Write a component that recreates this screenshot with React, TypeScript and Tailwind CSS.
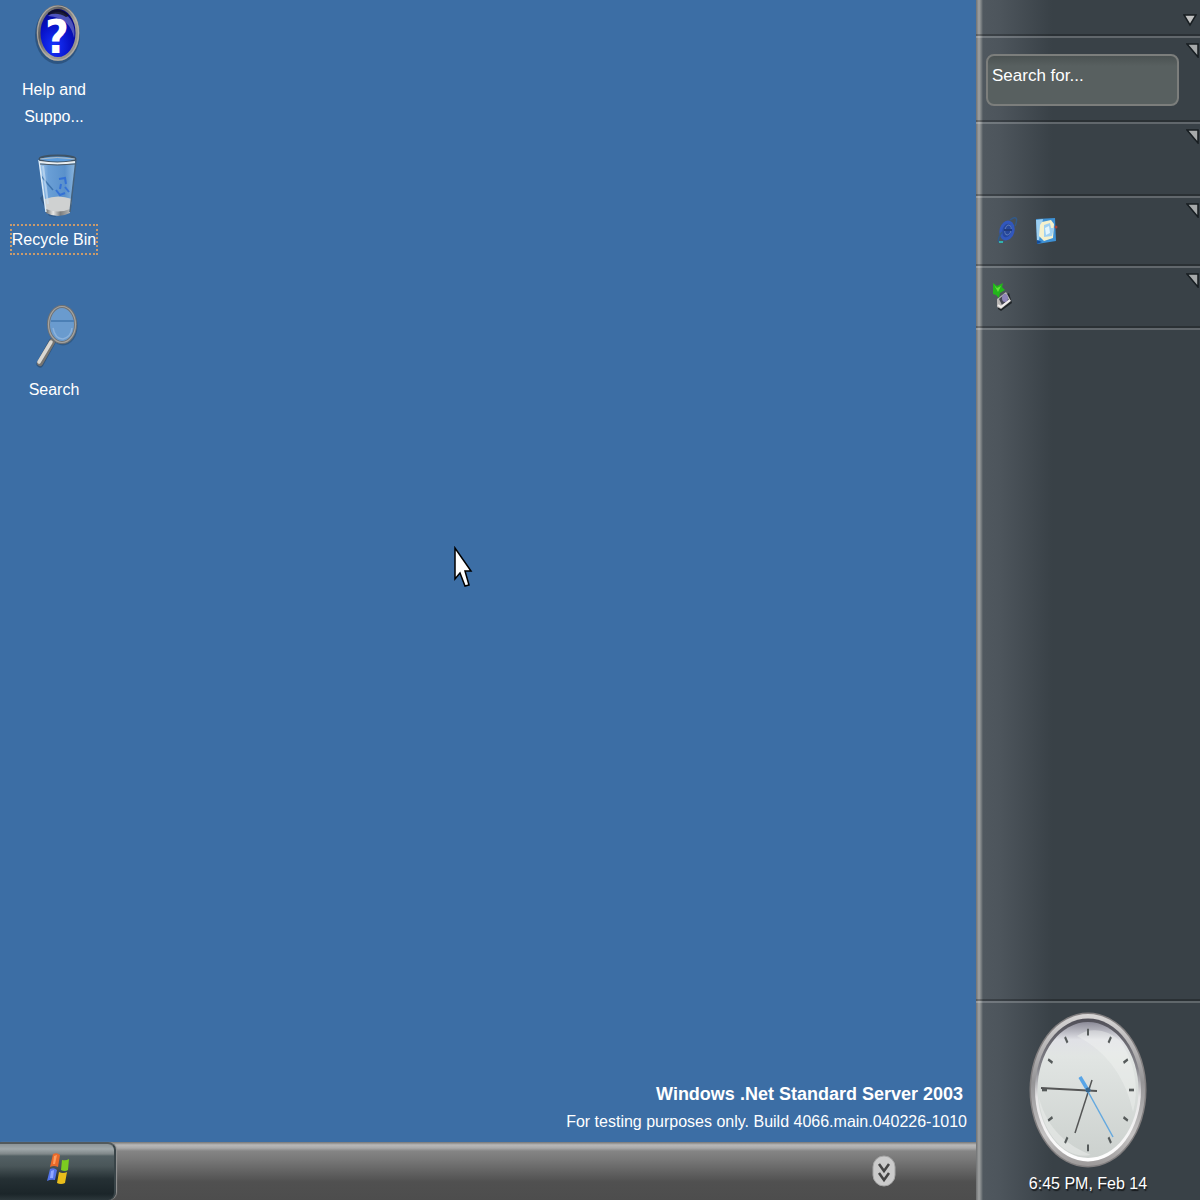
import type { ReactNode } from "react";

function HelpIcon() {
  return (
    <svg viewBox="0 0 64 64" className="h-16 w-16" aria-hidden="true">
      <defs>
        <linearGradient id="helpRim" x1="0" y1="0" x2="1" y2="1">
          <stop offset="0" stopColor="#9a9a9a" />
          <stop offset="0.3" stopColor="#5a5a5e" />
          <stop offset="0.6" stopColor="#a5a29c" />
          <stop offset="1" stopColor="#87847f" />
        </linearGradient>
        <radialGradient id="helpFill" cx="0.4" cy="0.75" r="0.8">
          <stop offset="0" stopColor="#1634ff" />
          <stop offset="0.55" stopColor="#0710c4" />
          <stop offset="1" stopColor="#05066a" />
        </radialGradient>
      </defs>
      <ellipse cx="35.5" cy="31" rx="22.5" ry="29" fill="#1e3c60" opacity="0.5" />
      <ellipse cx="36" cy="29" rx="19.5" ry="26" fill="url(#helpFill)" stroke="url(#helpRim)" strokeWidth="4" />
      <ellipse cx="36" cy="29" rx="20.5" ry="27" fill="none" stroke="#b9b5ad" strokeWidth="1.2" opacity="0.8" />
      <path d="M26 12C32 6 43 6 49 16C53 23 53 29 52 34C50 22 42 13 26 12Z" fill="#b9c0e8" opacity="0.4" />
      <path d="M26 9C32 3 41 4 47 12L44 13C38 9 32 9 26 11Z" fill="#101018" opacity="0.8" />
      <text x="35" y="49" textAnchor="middle" fontFamily="'DejaVu Sans Condensed','DejaVu Sans',sans-serif" fontWeight="700" fontSize="46" fill="#fff">?</text>
    </svg>
  );
}

function RecycleIcon() {
  return (
    <svg viewBox="0 0 64 64" className="h-16 w-16" aria-hidden="true">
      <defs>
        <linearGradient id="glass" x1="0" y1="0" x2="1" y2="0">
          <stop offset="0" stopColor="#a9cdee" />
          <stop offset="0.25" stopColor="#6a9fd6" />
          <stop offset="0.7" stopColor="#5a91cb" />
          <stop offset="1" stopColor="#8fb9e0" />
        </linearGradient>
        <linearGradient id="base" x1="0" y1="0" x2="1" y2="0">
          <stop offset="0" stopColor="#6d7072" />
          <stop offset="0.3" stopColor="#e8e8e6" />
          <stop offset="0.6" stopColor="#7b7d7e" />
          <stop offset="1" stopColor="#b8b8b6" />
        </linearGradient>
      </defs>
      <path d="M18 44L27 62L34 63L22 40Z" fill="#274a72" opacity="0.5" />
      <path d="M17 5L54 5L48 58Q36 64 24 58Z" fill="url(#glass)" />
      <path d="M23 45Q36 40 50 45L48 58Q36 64 24 58Z" fill="#cfd1d1" />
      <path d="M24 55Q36 60 48 55L48 59Q36 65 24 59Z" fill="url(#base)" />
      <path d="M19 22L31 36" stroke="#3d73ad" strokeWidth="1.5" />
      <path d="M37 25L43 24L44 30M39 30L38 35M34 36L38 41L43 39M43 33L47 38" fill="none" stroke="#2262d8" strokeWidth="2" opacity="0.7" />
      <path d="M17 6L24 58" stroke="#dcebf7" strokeWidth="1.5" />
      <path d="M21 12L26 50" stroke="#cde2f5" strokeWidth="2" opacity="0.6" />
      <path d="M54 6L48 58" stroke="#45617c" strokeWidth="1.5" />
      <ellipse cx="35.5" cy="5" rx="18" ry="3.5" fill="#5d9cdb" stroke="#3f5365" strokeWidth="2" />
      <path d="M18 5Q35 2 53 5" fill="none" stroke="#aebac4" strokeWidth="1" />
      <path d="M18 8Q35 11 53 8" fill="none" stroke="#e9eef1" strokeWidth="2" />
      <path d="M18 10Q35 12 53 10" fill="none" stroke="#4a5966" strokeWidth="1" />
    </svg>
  );
}

function MagnifierIcon() {
  return (
    <svg viewBox="0 0 64 64" className="h-16 w-16" aria-hidden="true">
      <path d="M30 38L18 60" stroke="#263c55" strokeWidth="7" strokeLinecap="round" opacity="0.5" />
      <path d="M30 38L18 59" stroke="#777571" strokeWidth="6" strokeLinecap="round" />
      <path d="M29 38L17 58" stroke="#d9d7d2" strokeWidth="3.5" strokeLinecap="round" />
      <ellipse cx="41" cy="22" rx="14.5" ry="19.5" fill="#284866" opacity="0.5" />
      <ellipse cx="40" cy="20.5" rx="13.5" ry="18" fill="#6a9bce" stroke="#6f7275" strokeWidth="3" />
      <ellipse cx="40" cy="20.5" rx="13.5" ry="18" fill="none" stroke="#a5a4a0" strokeWidth="1.2" />
      <path d="M29 17H52" fill="none" stroke="#4b7fb5" strokeWidth="2" />
      <path d="M31 24Q33 35 41 35Q49 33 50 24" fill="none" stroke="#8bb2dc" strokeWidth="1.5" />
    </svg>
  );
}

function BrowserIcon() {
  return (
    <svg viewBox="0 0 24 30" className="h-[30px] w-6" aria-hidden="true">
      <ellipse cx="12" cy="14.5" rx="6" ry="8.5" transform="rotate(15 12 14.5)" fill="#27479b" stroke="#3157bd" strokeWidth="3" />
      <ellipse cx="13" cy="14" rx="3" ry="5" transform="rotate(15 13 14)" fill="none" stroke="#5e7cb8" strokeWidth="1" />
      <path d="M9 14H17" stroke="#213a7b" strokeWidth="2" />
      <path d="M15 4C22-1 23 3 20 10M7 16C1 25 3 29 9 25" fill="none" stroke="#335987" strokeWidth="1.5" />
      <path d="M4 26L8 26" stroke="#32b4ad" strokeWidth="2" />
    </svg>
  );
}

function MailIcon() {
  return (
    <svg viewBox="0 0 24 30" className="h-[30px] w-6" aria-hidden="true">
      <path d="M1 3L20 2L21 25L2 28Z" fill="#3e91d5" />
      <path d="M1 4L8 3L4 24L2 25Z" fill="#c4e8fb" opacity="0.7" />
      <path d="M7 6L16 4L19 8L18 22L9 25L4 20L5 9Z" fill="#f5f1cd" />
      <path d="M9 9L15 7L16 12L19 12L17 20L9 21Z" fill="#9fd1f3" />
      <path d="M10 12L14 10L15 17L11 19Z" fill="#e2f5fd" />
      <path d="M2 24L7 26L2 28Z" fill="#124b9b" />
      <circle cx="21" cy="11" r="1.5" fill="#a84438" />
    </svg>
  );
}

function HardwareIcon() {
  return (
    <svg viewBox="0 0 22 30" className="h-[30px] w-[22px]" aria-hidden="true">
      <path d="M6 19L17 11L20 21L9 29L6 27Z" fill="#202529" />
      <path d="M5 17L14 10L19 19L9 27L5 25Z" fill="#b8b5b3" />
      <path d="M7 17L13 12L17 18L10 23Z" fill="#454653" />
      <ellipse cx="13" cy="16" rx="3" ry="4" fill="#8e84b8" />
      <path d="M6 23L9 25L18 18" fill="none" stroke="#f1eeee" strokeWidth="2" />
      <path d="M1 1L5 4L11 1L10 5L13 8L8 11L7 16L4 13L1 12Z" fill="#22b51b" />
      <path d="M2 3L5 6L9 4L6 10Z" fill="#61dd38" />
    </svg>
  );
}

function WindowsFlag() {
  return (
    <svg viewBox="0 0 24 32" className="h-8 w-6" aria-hidden="true">
      <path d="M6 1Q10-1 13 2L11 14Q7 12 3 14Z" fill="#e9692a" />
      <path d="M15 7Q19 8 22 6L21 17Q18 19 14 17Z" fill="#7ccc20" />
      <path d="M3 16Q7 14 10 17L8 27Q4 26 0 28Z" fill="#5474e8" />
      <path d="M12 19Q16 21 20 19L18 30Q14 32 10 30Z" fill="#e9bd1b" />
      <path d="M7 3L10 2L8 11L6 11Z" fill="#ff9d5d" />
      <path d="M4 18L7 17L6 25L3 25Z" fill="#91a8ff" />
    </svg>
  );
}

function Clock() {
  const ticks = Array.from({ length: 12 }, (_, i) => i * 30);

  return (
    <svg viewBox="0 0 118 156" className="h-[156px] w-[118px]" role="img" aria-label="Clock">
      <defs>
        <linearGradient id="clockRim" x1="0" y1="0" x2="0" y2="1">
          <stop offset="0" stopColor="#d8d6d6" />
          <stop offset="0.45" stopColor="#959496" />
          <stop offset="0.8" stopColor="#c4c2c2" />
          <stop offset="1" stopColor="#9c9999" />
        </linearGradient>
        <linearGradient id="clockBezel" x1="0" y1="0" x2="0" y2="1">
          <stop offset="0" stopColor="#504f58" />
          <stop offset="0.35" stopColor="#85858b" />
          <stop offset="0.55" stopColor="#e7e6e7" />
          <stop offset="1" stopColor="#ffffff" />
        </linearGradient>
        <linearGradient id="clockFace" x1="0" y1="0" x2="0" y2="1">
          <stop offset="0" stopColor="#8c8b98" />
          <stop offset="0.13" stopColor="#e0e1e6" />
          <stop offset="0.25" stopColor="#e1e5e3" />
          <stop offset="1" stopColor="#ccd1ce" />
        </linearGradient>
      </defs>
      <ellipse cx="59" cy="78" rx="58.5" ry="77.5" fill="#827f80" />
      <ellipse cx="59" cy="78" rx="57" ry="76" fill="url(#clockRim)" />
      <ellipse cx="59" cy="78" rx="53" ry="71.5" fill="url(#clockBezel)" />
      <ellipse cx="59" cy="78" rx="50.5" ry="68" fill="url(#clockFace)" />
      <path d="M48 24C80 40 98 70 104 100C110 80 107 52 92 30C80 18 62 14 48 24Z" fill="#f2f4f3" opacity="0.4" />
      <path d="M10 86C19 118 38 133 62 143C36 149 12 119 10 86Z" fill="#edf0ee" opacity="0.5" />
      <g transform="translate(59 78) scale(1 1.330)">
        {ticks.map((angle) => (
          <path key={angle} d="M0-46V-41" stroke="#555a5a" strokeWidth="2" transform={`rotate(${angle})`} />
        ))}
      </g>
      <path d="M12 76L68 79" stroke="#555656" strokeWidth="2" />
      <path d="M46 121L63 68" stroke="#555656" strokeWidth="1.5" />
      <path d="M51 65L84 125" stroke="#65a9df" strokeWidth="1.5" />
      <path d="M51 65L60 80" stroke="#58a5e7" strokeWidth="3.5" />
      <circle cx="59" cy="78" r="2.5" fill="#39658b" />
    </svg>
  );
}

function DesktopItem({ label, focused, children }: { label: string; focused?: boolean; children: ReactNode }) {
  return (
    <button className="flex h-[150px] w-full flex-col items-center gap-2 pt-1">
      {children}
      <span className={focused ? "leading-[27px] outline-2 outline-dotted outline-[#c99a6c]" : "w-20 leading-[27px]"}>
        {label}
      </span>
    </button>
  );
}

function PanelMenu({ label }: { label: string }) {
  return (
    <button aria-label={label} className="h-4 w-[14px] shrink-0">
      <svg viewBox="0 0 14 16" className="h-4 w-[14px]">
        <path d="M1 2H12V15Z" fill="#a7aaab" stroke="#171d21" strokeWidth="1.5" />
      </svg>
    </button>
  );
}

function Sidebar() {
  const panel = "flex items-start justify-between border-t-2 border-b-2 border-t-white/20 border-b-black/25 pt-1";

  return (
    <aside className="flex w-56 shrink-0 flex-col bg-[linear-gradient(90deg,#6f7172_0px,#a0a2a2_3px,#7d8284_5px,#50585f_7px,#4d555c_24px,#394147_76px,#394147_100%)]">
      <div className="flex h-9 justify-end border-b-2 border-b-black/25 pt-3 pr-[3px]">
        <button aria-label="Sidebar menu" className="h-4 w-[14px]">
          <svg viewBox="0 0 14 16" className="h-4 w-[14px]">
            <path d="M1 3H13L7 13Z" fill="#c1c2c2" stroke="#171d21" strokeWidth="1.5" />
          </svg>
        </button>
      </div>
      <section className={`${panel} h-[86px]`}>
        <input
          type="text"
          aria-label="Search for"
          placeholder="Search for..."
          className="mt-3 mr-[7px] ml-[10px] h-[52px] min-w-0 flex-1 rounded-lg border-2 border-[#7c7e7c] bg-[linear-gradient(180deg,#4b5252_0px,#586060_10px,#586060_100%)] px-1 pb-2 text-[17px] outline-none placeholder:text-white placeholder:opacity-100"
        />
        <PanelMenu label="Search options" />
      </section>
      <section className={`${panel} h-[74px]`}>
        <span className="flex-1" />
        <PanelMenu label="Panel options" />
      </section>
      <section className={`${panel} h-[70px]`}>
        <div className="flex gap-4 pt-[14px] pl-[19px]">
          <button aria-label="Internet" className="h-[30px]"><BrowserIcon /></button>
          <button aria-label="Mail" className="h-[30px]"><MailIcon /></button>
        </div>
        <PanelMenu label="Quick launch options" />
      </section>
      <section className={`${panel} h-[62px]`}>
        <button aria-label="Safely remove hardware" className="mt-[10px] ml-4 h-[30px]"><HardwareIcon /></button>
        <PanelMenu label="Notification options" />
      </section>
      <div className="flex-1 border-t-2 border-b-2 border-t-white/20 border-b-black/25" />
      <section className="flex flex-col items-center border-t-2 border-t-white/20 pt-[9px]">
        <Clock />
        <time className="py-1 leading-6 [text-shadow:1px_2px_1px_#15191c]">6:45 PM, Feb 14</time>
      </section>
    </aside>
  );
}

function Taskbar() {
  return (
    <footer className="flex h-[58px] items-center bg-[linear-gradient(180deg,#777776_0px,#b8b8b8_3px,#aaaaaa_6px,#858585_9px,#777777_18px,#505050_40px,#4d4d4d_100%)]">
      <button
        aria-label="Start"
        className="flex h-full w-[116px] items-center justify-center rounded-r-[8px] border-t-2 border-r-2 border-t-[#535a5c] border-r-[#394448] bg-[linear-gradient(180deg,#8c9497_0px,#a0a8aa_5px,#7f8789_10px,#536064_12px,#4a5659_22px,#253034_35px,#1b2529_50px,#2c373b_100%)] pb-[6px] pl-1 shadow-[1px_0_1px_#949494]"
      >
        <WindowsFlag />
      </button>
      <span className="flex-1" />
      <button aria-label="Show hidden items" className="mr-20 h-8 w-6">
        <svg viewBox="0 0 24 32" className="h-8 w-6">
          <rect x="1" y="1" width="22" height="30" rx="11" fill="#cbcbcb" stroke="#a5a5a5" />
          <path d="M7 9L12 16L17 9M7 18L12 25L17 18" fill="none" stroke="#444" strokeWidth="2.5" />
        </svg>
      </button>
    </footer>
  );
}

export default function App() {
  return (
    <div className="flex min-h-screen bg-[#3c6ea5] font-['Liberation_Sans',Arial,sans-serif] text-[16px] text-white">
      <div className="flex min-w-0 flex-1 flex-col">
        <main className="flex flex-1 flex-col justify-between">
          <nav aria-label="Desktop" className="w-[108px]">
            <DesktopItem label="Help and Suppo..."><HelpIcon /></DesktopItem>
            <DesktopItem label="Recycle Bin" focused><RecycleIcon /></DesktopItem>
            <DesktopItem label="Search"><MagnifierIcon /></DesktopItem>
          </nav>
          <div className="pr-[9px] pb-[6px] text-right leading-7">
            <p className="pr-1 text-[18px] leading-7 font-bold">Windows .Net Standard Server 2003</p>
            <p>For testing purposes only. Build 4066.main.040226-1010</p>
          </div>
        </main>
        <Taskbar />
      </div>
      <Sidebar />
      <svg viewBox="0 0 20 42" className="pointer-events-none absolute top-[546px] left-[453px] h-[42px] w-5" aria-hidden="true">
        <path d="M2 2V33L7 27L12 40L16 39L12 25H18Z" fill="#fff" stroke="#000" strokeWidth="1.5" />
      </svg>
    </div>
  );
}
